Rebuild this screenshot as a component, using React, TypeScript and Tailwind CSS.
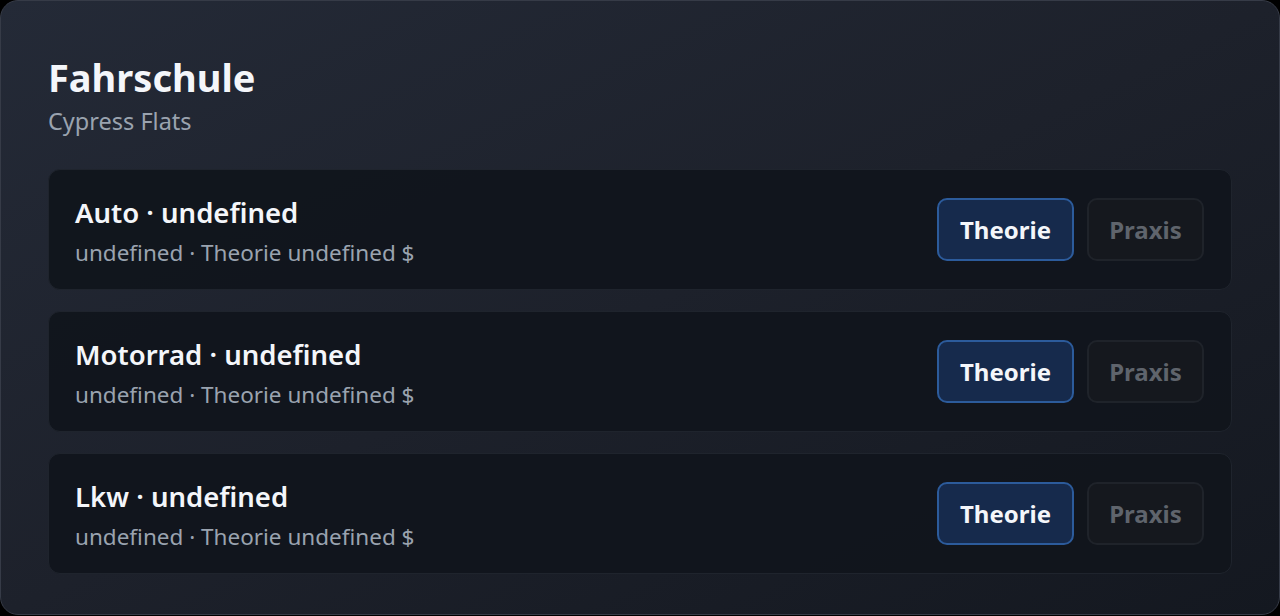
export default function App() {
  const rows = ['Auto', 'Motorrad', 'Lkw'];

  return (
    <div className="h-[616px] w-[1280px] bg-black" style={{ fontFamily: '"Noto Sans", "Open Sans", sans-serif' }}>
      <div className="h-[615px] rounded-[18px] border border-[#363b47] bg-gradient-to-br from-[#242a37] via-[#1d212b] to-[#141820] px-[47px] pt-[51px] pb-10">
        <h1 className="text-[38px] font-bold leading-[50px] text-[#f4f6fa]">Fahrschule</h1>
        <p className="mt-[4px] text-[23.5px] leading-[30px] text-[#9aa3af]">Cypress Flats</p>
        <div className="mt-[33px] flex flex-col gap-[21px]">
          {rows.map((r) => (
            <div key={r} className="flex h-[121px] items-center justify-between rounded-[12px] border border-[#1f242d] bg-[#11151c]/95 pl-[26px] pr-[27px]">
              <div className="mt-[4px] flex flex-col">
                <span className="text-[27.5px] font-semibold leading-[36px] text-[#f4f6fa]">{r} · undefined</span>
                <span className="mt-[7px] text-[22.5px] leading-[30px] text-[#9aa3af]">undefined · Theorie undefined $</span>
              </div>
              <div className="flex items-center gap-[13px]">
                <button className="h-[63px] w-[137px] rounded-[10px] border-2 border-[#2c5b9b] bg-[#162a4c] pt-[1px] text-[24px] font-bold text-[#f4f6fa]">
                  Theorie
                </button>
                <button className="h-[63px] w-[117px] rounded-[10px] border-2 border-[#1f232a] bg-[#15181e] pt-[1px] text-[24px] font-bold text-[#5f646c]">
                  Praxis
                </button>
              </div>
            </div>
          ))}
        </div>
      </div>
    </div>
  );
}
